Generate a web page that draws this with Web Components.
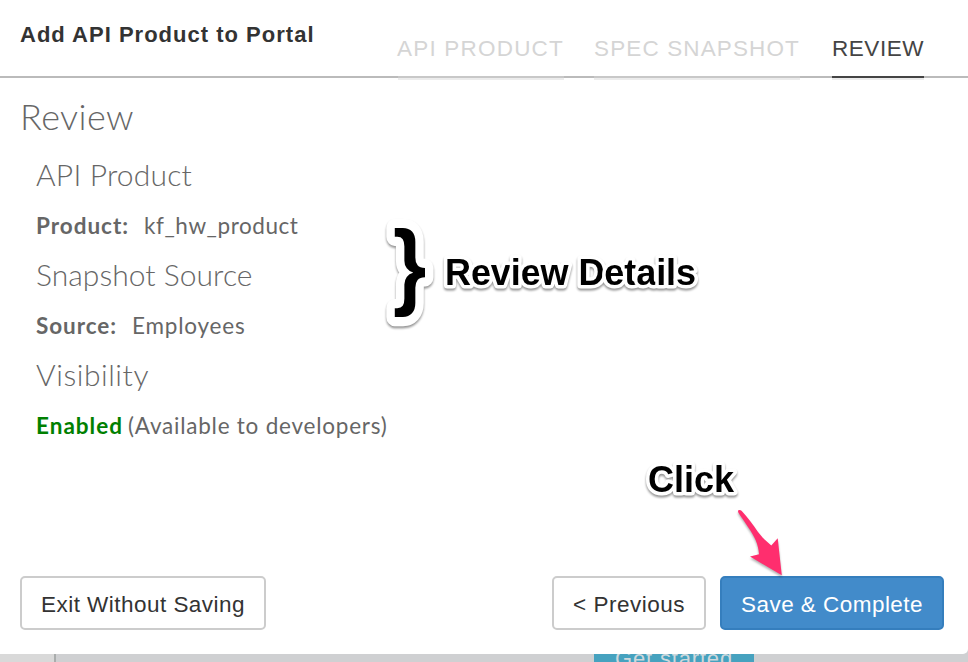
<!DOCTYPE html>
<html lang="en">
<head>
<meta charset="utf-8">
<title>Add API Product to Portal</title>
<style>
html,body{margin:0;height:100%;overflow:hidden;background:#cfd0d2}
body{font-family:"Liberation Sans",Arial,sans-serif;font-size:22px;color:#333}
</style>
</head>
<body>
<portal-screen></portal-screen>
<script>
function define(name, html, setup) {
  const t = document.createElement('template');
  t.innerHTML = html;
  customElements.define(name, class extends HTMLElement {
    connectedCallback() {
      if (this.shadowRoot) return;
      this.attachShadow({mode: 'open'}).append(t.content.cloneNode(true));
      if (setup) setup(this);
    }
  });
}

// Text tracked out so that the run fills the requested width.
define('tracked-text', `<style>:host{display:inline-block;white-space:pre}span{display:inline-block}</style><span></span>`, el => {
  const s = el.shadowRoot.querySelector('span');
  s.textContent = el.getAttribute('text');
  const w = parseFloat(el.getAttribute('width'));
  s.style.letterSpacing = (w - s.getBoundingClientRect().width) / s.textContent.length + 'px';
  el.style.width = w + 'px';
});

define('wizard-tab', `<style>
:host{display:block;box-sizing:border-box;height:60px;padding-top:16px;font-size:22.5px;line-height:30px;color:#d5d5d5;border-bottom:2px solid #c8c8c8;box-shadow:0 2px 0 #ececec}
:host([active]){color:#444;border-color:#444}
</style><slot></slot>`);

define('wizard-header', `<style>
:host{display:flex;justify-content:space-between;box-sizing:border-box;height:78px;padding:18px 44px 0 20px;border-bottom:2px solid #bbb}
.title{font-weight:bold;line-height:34px}
nav{display:flex;gap:30px}
.first tracked-text{margin-left:-1px}
.last{margin-left:2px}
</style>
<div class="title"><tracked-text text="Add API Product to Portal" width="294.5"></tracked-text></div>
<nav>
<wizard-tab class="first"><tracked-text text="API PRODUCT" width="167"></tracked-text></wizard-tab>
<wizard-tab><tracked-text text="SPEC SNAPSHOT" width="206"></tracked-text></wizard-tab>
<wizard-tab class="last" active><tracked-text text="REVIEW" width="92"></tracked-text></wizard-tab>
</nav>`);

define('review-section', `<style>
:host{display:block}
h2{margin:0;height:50px;font-size:30px;line-height:48px;font-weight:300}
div{height:50px;line-height:52px;display:flex;font-size:22.5px}
</style><h2><slot name="heading"></slot></h2><div><slot></slot></div>`);

define('review-panel', `<style>
:host{display:block;flex:1;padding:18px 20px 0;color:#666;font-family:Lato,sans-serif}
h1{margin:0 0 14px;font-size:36px;font-weight:300;line-height:40px;height:40px}
.sections{padding-left:16px}
b{font-weight:700;margin-right:15px}
.on{color:green;margin-right:5px}
</style>
<h1><tracked-text text="Review" width="114"></tracked-text></h1>
<div class="sections">
<review-section><tracked-text slot="heading" text="API Product" width="156"></tracked-text>
<b><tracked-text text="Product:" width="93"></tracked-text></b><tracked-text text="kf_hw_product" width="154.500"></tracked-text></review-section>
<review-section><tracked-text slot="heading" text="Snapshot Source" width="216.500"></tracked-text>
<b><tracked-text text="Source:" width="81"></tracked-text></b><tracked-text text="Employees" width="113.500"></tracked-text></review-section>
<review-section><tracked-text slot="heading" text="Visibility" width="113"></tracked-text>
<b class="on"><tracked-text text="Enabled" width="87"></tracked-text></b><tracked-text text="(Available to developers)" width="259.500"></tracked-text></review-section>
</div>`);

define('action-button', `<style>
:host{display:block;box-sizing:border-box;height:54px;border:2px solid #ccc;border-radius:5px;background:#fff;color:#333;padding:0 19px;font-size:22.5px;line-height:53px;text-align:center}
:host([primary]){background:#428bca;border-color:#357ebd;color:#fff}
</style><slot></slot>`);

define('wizard-footer', `<style>
:host{display:flex;gap:14px;padding:0 24px 24px 20px}
.exit{margin-right:auto}
</style>
<action-button class="exit"><tracked-text text="Exit Without Saving" width="204"></tracked-text></action-button>
<action-button><tracked-text text="&lt; Previous" width="112"></tracked-text></action-button>
<action-button primary><tracked-text text="Save &amp; Complete" width="182"></tracked-text></action-button>`);

define('call-out', `<style>
:host{position:absolute;filter:drop-shadow(0 2px 1px rgba(0,0,0,.42))}
svg{display:block;overflow:visible}
text{fill:#000;stroke:#fff;stroke-width:7px;stroke-linejoin:round;paint-order:stroke fill;font-weight:bold;font-size:36px}
</style><svg width="10" height="40"><text x="0" y="32"></text></svg>`, el => {
  const text = el.shadowRoot.querySelector('text');
  text.textContent = el.getAttribute('text');
  if (el.hasAttribute('width')) text.setAttribute('textLength', el.getAttribute('width'));
  if (el.hasAttribute('brace')) {
    text.style.fontSize = '94px';
    text.style.strokeWidth = '18.5px';
    text.setAttribute('transform', 'scale(.91 1)');
  }
});

define('pointer-arrow', `<style>:host{position:absolute;filter:drop-shadow(0 2px 1px rgba(0,0,0,.3))}svg{display:block}</style>
<svg width="60" height="80" viewBox="0 0 60 80"><path d="M8.300 10.300Q10 9.300 11.500 10.800C18 18 23 24.500 28 32Q34 40 41.300 45.500L47.700 38.300L51.800 75.300L20 56.500L29 54.300C28.500 44 24 36 19 28.500C15 22 11 17 8.300 12.500Q7.800 11 8.300 10.300Z" fill="#ff2e6e"/></svg>`);

define('page-behind', `<style>
:host{display:flex;height:8px;overflow:hidden;background:#cfd0d2}
.side{width:54px;background:#d9d9d9;border-right:2px solid #aaadad;margin-right:538px}
.cta{width:160px;height:8px;background:#46a2bf;color:#cfd8dc;text-align:center;line-height:10px;overflow:hidden}
</style><div class="side"></div><div class="cta"><tracked-text text="Get started" width="118"></tracked-text></div>`);

define('portal-screen', `<style>
:host{display:block;position:relative;width:968px;height:662px;overflow:hidden}
.dialog{display:flex;flex-direction:column;height:654px;background:#fff;border-bottom-right-radius:5px}
</style>
<div class="dialog"><wizard-header></wizard-header><review-panel></review-panel><wizard-footer></wizard-footer></div>
<page-behind></page-behind>
<call-out brace text="}" style="left:393px;top:265px"></call-out>
<call-out text="Review Details" width="251" style="left:445px;top:253px"></call-out>
<call-out text="Click" width="86" style="left:648px;top:460px"></call-out>
<pointer-arrow style="left:730px;top:500px"></pointer-arrow>`);
</script>
</body>
</html>
